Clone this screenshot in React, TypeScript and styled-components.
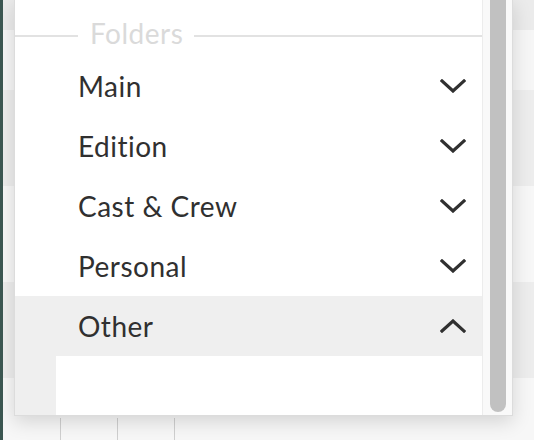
import React from "react";
import styled, { createGlobalStyle } from "styled-components";

const GlobalStyle = createGlobalStyle`
  html, body { margin: 0; padding: 0; overflow: hidden; }
  body { font-family: "Lato", "Noto Sans", sans-serif; background: #f2f2f2; }
`;

const Page = styled.div`
  position: relative;
  width: 534px;
  height: 440px;
  overflow: hidden;
  border-left: 3px solid #3b5651;
  box-sizing: border-box;
`;

const Backdrop = styled.div`
  display: flex;
  flex-direction: column;
  height: 100%;
`;

const BackRow = styled.div<{ $h: number; $shade: string }>`
  height: ${(p) => p.$h}px;
  background: ${(p) => p.$shade};
  flex-shrink: 0;
  display: flex;
`;

const BottomCells = styled.div`
  display: flex;
  margin-top: 40px;
  margin-left: 57px;
`;

const Cell = styled.div`
  width: 56px;
  height: 30px;
  border-left: 1px solid #cfcfcf;
`;

const Panel = styled.div`
  position: absolute;
  left: 11px;
  top: -1px;
  width: 499px;
  height: 417px;
  box-sizing: border-box;
  border: 1px solid #dcdcdc;
  background: #f9f9f9;
  box-shadow: 0 6px 18px rgba(0, 0, 0, 0.14);
  display: flex;
`;

const Content = styled.div`
  width: 467px;
  background: #ffffff;
  display: flex;
  flex-direction: column;
  border-right: 1px solid #ececec;
`;

const Legend = styled.div`
  display: flex;
  align-items: center;
  height: 30px;
  margin-top: 21px;
  margin-bottom: 5px;
`;

const LegendLine = styled.div<{ $grow?: boolean }>`
  height: 2px;
  background: #e2e2e2;
  ${(p) => (p.$grow ? "flex: 1;" : "width: 63px;")}
`;

const LegendText = styled.span`
  font-size: 28px;
  letter-spacing: 0.5px;
  color: #dadada;
  padding: 0 11px 0 12px;
  line-height: 30px;
  margin-top: -6px;
`;

const Row = styled.div<{ $active?: boolean }>`
  height: 60px;
  display: flex;
  align-items: center;
  justify-content: space-between;
  padding: 0 16px 0 63px;
  background: ${(p) => (p.$active ? "#efefef" : "#ffffff")};
`;

const Label = styled.span`
  font-size: 28px;
  letter-spacing: 0.5px;
  color: #303030;
`;

const Expanded = styled.div`
  flex: 1;
  background: #efefef;
  padding-left: 41px;
  display: flex;
`;

const ExpandedBody = styled.div`
  flex: 1;
  background: #ffffff;
`;

const Track = styled.div`
  flex: 1;
  background: #f9f9f9;
  padding: 0 6px 3px 7px;
  display: flex;
`;

const Thumb = styled.div`
  width: 16px;
  height: 412px;
  background: #c1c1c1;
  border-radius: 0 0 8px 8px;
`;

const Chevron = ({ up }: { up?: boolean }) => (
  <svg width="26" height="14" viewBox="0 0 26 14">
    <polyline
      points={up ? "2,12 13,2 24,12" : "2,2 13,12 24,2"}
      fill="none"
      stroke="#303030"
      strokeWidth="3.2"
      strokeLinecap="square"
      strokeLinejoin="miter"
    />
  </svg>
);

const folders = ["Main", "Edition", "Cast & Crew", "Personal", "Other"];

export default function App() {
  return (
    <>
      <GlobalStyle />
      <Page>
        <Backdrop>
          <BackRow $h={30} $shade="#ebebeb" />
          <BackRow $h={60} $shade="#f6f6f6" />
          <BackRow $h={96} $shade="#ededed" />
          <BackRow $h={96} $shade="#f7f7f7" />
          <BackRow $h={96} $shade="#ededed" />
          <BackRow $h={62} $shade="#f7f7f7">
            <BottomCells>
              <Cell />
              <Cell />
              <Cell />
            </BottomCells>
          </BackRow>
        </Backdrop>
        <Panel>
          <Content>
            <Legend>
              <LegendLine />
              <LegendText>Folders</LegendText>
              <LegendLine $grow />
            </Legend>
            {folders.map((f) => (
              <Row key={f} $active={f === "Other"}>
                <Label>{f}</Label>
                <Chevron up={f === "Other"} />
              </Row>
            ))}
            <Expanded>
              <ExpandedBody />
            </Expanded>
          </Content>
          <Track>
            <Thumb />
          </Track>
        </Panel>
      </Page>
    </>
  );
}
